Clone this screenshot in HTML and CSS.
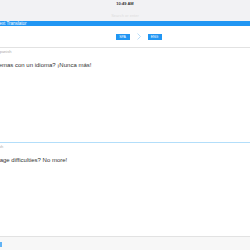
FILE: index.html
```html
<!DOCTYPE html>
<html lang="en">
<head>
    <meta charset="UTF-8">
    <meta name="viewport" content="width=device-width, initial-scale=1.0">
    <title>Text Translator</title>
    <link rel="stylesheet" href="styles.css">
</head>
<body>
    <div class="status">
        <div class="time">10:49 AM</div>
        <div class="url">Search or enter</div>
    </div>
    <div class="titlebar">Text Translator</div>

    <div class="langbar">
        <span class="lang">SPA</span>
        <svg class="arrow" width="4" height="7" viewBox="0 0 4 7">
            <path d="M0.5 0.5 L3.5 3.5 L0.5 6.5" fill="none" stroke="#a8d6f8" stroke-width="0.8"/>
        </svg>
        <span class="lang">ENG</span>
    </div>

    <div class="panel source">
        <div class="label label-src">Spanish</div>
        <div class="text text-src">¿Problemas con un idioma? ¡Nunca más!</div>
    </div>

    <div class="panel target">
        <div class="label label-tgt">English</div>
        <div class="text text-tgt">Language difficulties? No more!</div>
    </div>

    <div class="footer">
        <span class="footer-icon"></span>
    </div>
</body>
</html>
```

FILE: styles.css
```css
html, body {
    margin: 0;
    padding: 0;
    width: 250px;
    height: 250px;
    overflow: hidden;
    font-family: "Liberation Sans", Arial, sans-serif;
    background: #fff;
}

.status {
    height: 21px;
    background-color: #f2f2f4;
    text-align: center;
}

.time {
    padding-top: 2px;
    font-size: 4px;
    line-height: 4px;
    font-weight: bold;
    color: #333;
}

.url {
    margin-top: 7px;
    font-size: 4px;
    line-height: 5px;
    color: #ddd;
}

.titlebar {
    height: 5px;
    line-height: 5px;
    background-color: #2196f3;
    color: #fff;
    font-size: 4.5px;
    margin-left: -3px;
}

.langbar {
    height: 21px;
    display: flex;
    justify-content: center;
    align-items: center;
    gap: 7px;
    border-bottom: 1px solid #e2e2e2;
    padding-left: 27px;
}

.lang {
    background-color: #2196f3;
    color: #fff;
    font-size: 3.5px;
    line-height: 6px;
    width: 14px;
    text-align: center;
}

.arrow {
    display: block;
}

.panel {
    height: 94px;
}

.target {
    border-top: 1px solid #b3defa;
    height: 93px;
}

.label {
    font-size: 4px;
    line-height: 5px;
    color: #aaa;
    padding-top: 1px;
}

.label-src {
    margin-left: -3px;
}

.label-tgt {
    margin-left: -10px;
}

.text {
    margin-top: 7px;
    font-size: 6px;
    line-height: 8px;
    color: #333;
    white-space: nowrap;
}

.text-src {
    margin-left: -19px;
}

.text-tgt {
    margin-left: -17px;
}

.footer {
    height: 14px;
    background-color: #f7f7f7;
    border-top: 1px solid #e2e2e2;
    display: flex;
    align-items: center;
}

.footer-icon {
    width: 2px;
    height: 5px;
    background-color: #2196f3;
    opacity: 0.7;
}
```
